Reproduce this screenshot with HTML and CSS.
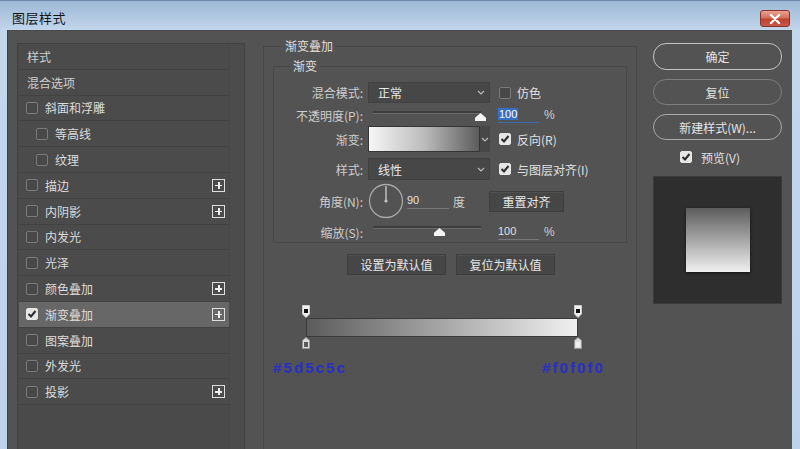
FILE: index.html
```html
<!DOCTYPE html>
<html lang="zh">
<head>
<meta charset="utf-8">
<title>图层样式</title>
<link rel="stylesheet" href="styles.css">
</head>
<body>
<div class="window">
  <div class="titlebar">
    <span class="title">图层样式</span>
    <span class="close"><svg width="12" height="10" viewBox="0 0 12 10"><path d="M2 1 L10 9 M10 1 L2 9" stroke="#fff" stroke-width="2.4" stroke-linecap="round"/></svg></span>
  </div>
  <div class="body">
    <div class="left">
      <div class="list">
        <div class="row head">样式</div>
        <div class="row head">混合选项</div>
        <div class="row"><span class="cb"></span><span class="lbl">斜面和浮雕</span></div>
        <div class="row sub"><span class="cb"></span><span class="lbl">等高线</span></div>
        <div class="row sub"><span class="cb"></span><span class="lbl">纹理</span></div>
        <div class="row"><span class="cb"></span><span class="lbl">描边</span><span class="plus"></span></div>
        <div class="row"><span class="cb"></span><span class="lbl">内阴影</span><span class="plus"></span></div>
        <div class="row"><span class="cb"></span><span class="lbl">内发光</span></div>
        <div class="row"><span class="cb"></span><span class="lbl">光泽</span></div>
        <div class="row"><span class="cb"></span><span class="lbl">颜色叠加</span><span class="plus"></span></div>
        <div class="row selected"><span class="cb checked"><svg width="10" height="10" viewBox="0 0 10 10"><path d="M1.5 5 L4 7.5 L8.5 2" fill="none" stroke="#2b2b2b" stroke-width="2"/></svg></span><span class="lbl">渐变叠加</span><span class="plus"></span></div>
        <div class="row"><span class="cb"></span><span class="lbl">图案叠加</span></div>
        <div class="row"><span class="cb"></span><span class="lbl">外发光</span></div>
        <div class="row"><span class="cb"></span><span class="lbl">投影</span><span class="plus"></span></div>
      </div>
      <div class="scroll"></div>
    </div>

    <div class="middle">
      <fieldset class="outer">
        <legend>渐变叠加</legend>
        <fieldset class="inner">
          <legend>渐变</legend>
          <div class="frow r1">
            <span class="flabel">混合模式:</span>
            <span class="select"><span class="sval">正常</span><span class="chev"><svg width="8" height="5" viewBox="0 0 8 5"><path d="M1 1 L4 4 L7 1" fill="none" stroke="#bbb" stroke-width="1.2"/></svg></span></span>
            <span class="cb ml"></span><span class="ctext">仿色</span>
          </div>
          <div class="frow r2">
            <span class="flabel">不透明度(P):</span>
            <span class="slider"><span class="track"></span><span class="thumb" style="left:107px"></span></span>
            <span class="num"><span class="hl">100</span></span><span class="pct">%</span>
          </div>
          <div class="frow r3">
            <span class="flabel">渐变:</span>
            <span class="gswatch"></span><span class="gchev"><svg width="8" height="5" viewBox="0 0 8 5"><path d="M1 1 L4 4 L7 1" fill="none" stroke="#bbb" stroke-width="1.2"/></svg></span>
            <span class="cb checked ml"><svg width="10" height="10" viewBox="0 0 10 10"><path d="M1.5 5 L4 7.5 L8.5 2" fill="none" stroke="#2b2b2b" stroke-width="2"/></svg></span><span class="ctext">反向(R)</span>
          </div>
          <div class="frow r4">
            <span class="flabel">样式:</span>
            <span class="select"><span class="sval">线性</span><span class="chev"><svg width="8" height="5" viewBox="0 0 8 5"><path d="M1 1 L4 4 L7 1" fill="none" stroke="#bbb" stroke-width="1.2"/></svg></span></span>
            <span class="cb checked ml"><svg width="10" height="10" viewBox="0 0 10 10"><path d="M1.5 5 L4 7.5 L8.5 2" fill="none" stroke="#2b2b2b" stroke-width="2"/></svg></span><span class="ctext">与图层对齐(I)</span>
          </div>
          <div class="frow r5">
            <span class="flabel">角度(N):</span>
            <span class="dial"><svg width="36" height="36" viewBox="0 0 36 36"><circle cx="18" cy="18" r="16.5" fill="none" stroke="#a8a8a8" stroke-width="1.3"/><line x1="18" y1="18" x2="18" y2="3" stroke="#c8c8c8" stroke-width="1.4"/><circle cx="18" cy="18" r="1.6" fill="#c8c8c8"/></svg></span>
            <span class="num angle">90</span><span class="deg">度</span>
            <span class="btn reset">重置对齐</span>
          </div>
          <div class="frow r6">
            <span class="flabel">缩放(S):</span>
            <span class="slider"><span class="track"></span><span class="thumb" style="left:66px"></span></span>
            <span class="num">100</span><span class="pct">%</span>
          </div>
        </fieldset>

        <div class="defaults">
          <span class="btn dbtn">设置为默认值</span>
          <span class="btn dbtn">复位为默认值</span>
        </div>

        <div class="geditor">
          <div class="stops">
            <svg width="8" height="13" viewBox="0 0 8 13"><path d="M0.5 0.5 H7.5 V9 L4 12.5 L0.5 9 Z" fill="#eee" stroke="#ccc"/><rect x="2" y="4" width="4" height="4" fill="#111"/></svg>
            <svg width="8" height="13" viewBox="0 0 8 13"><path d="M0.5 0.5 H7.5 V9 L4 12.5 L0.5 9 Z" fill="#eee" stroke="#ccc"/><rect x="2" y="4" width="4" height="4" fill="#111"/></svg>
          </div>
          <div class="gbar"></div>
          <div class="stops">
            <svg width="8" height="12" viewBox="0 0 8 12"><path d="M0.5 11.5 V3.5 L4 0.5 L7.5 3.5 V11.5 Z" fill="#ddd" stroke="#999"/><rect x="2" y="5" width="4" height="5" fill="#5d5c5c"/></svg>
            <svg width="8" height="12" viewBox="0 0 8 12"><path d="M0.5 11.5 V3.5 L4 0.5 L7.5 3.5 V11.5 Z" fill="#ddd" stroke="#999"/><rect x="2" y="5" width="4" height="5" fill="#f0f0f0"/></svg>
          </div>
        </div>

        <div class="hex"><span>#5d5c5c</span><span>#f0f0f0</span></div>
      </fieldset>
    </div>

    <div class="right">
      <span class="pill primary">确定</span>
      <span class="pill dim">复位</span>
      <span class="pill">新建样式(W)...</span>
      <div class="preview-row"><span class="cb checked"><svg width="10" height="10" viewBox="0 0 10 10"><path d="M1.5 5 L4 7.5 L8.5 2" fill="none" stroke="#2b2b2b" stroke-width="2"/></svg></span><span class="ptext">预览(V)</span></div>
      <div class="preview"><div class="psquare"></div></div>
    </div>
  </div>
</div>
</body>
</html>
```

FILE: styles.css
```css
* { box-sizing: border-box; }
html, body { margin: 0; padding: 0; }
body {
  font-family: "Noto Sans CJK SC", "Noto Sans", sans-serif;
  font-size: 12px;
  background: #b9cfe8;
}
.window {
  width: 800px;
  height: 449px;
  overflow: hidden;
  display: flex;
  flex-direction: column;
  background: linear-gradient(to bottom, #9db8d6 0px, #b9cee6 22px, #c3d7ec 30px, #bcd3ec 100%);
  border-top: 1px solid #6f8aa8;
}
.titlebar {
  flex: none;
  height: 29px;
  display: flex;
  align-items: center;
  justify-content: space-between;
  padding: 5px 10px 0 12px;
}
.title {
  font-size: 13px;
  color: #151515;
  line-height: 16px;
  letter-spacing: 0.5px;
}
.close {
  width: 30px;
  height: 17px;
  margin-top: 1px;
  border: 1px solid #8a3425;
  border-radius: 3px;
  background: linear-gradient(to bottom, #e9a394 0%, #d4705c 45%, #bd432c 55%, #c9584a 100%);
  display: flex;
  align-items: center;
  justify-content: center;
}
.body {
  flex: 1;
  min-height: 0;
  overflow: hidden;
  margin: 0 8px 0 7px;
  background: #535353;
  border-left: 1px solid #3f3f3f;
  border-top: 1px solid #4a4a4a;
  display: flex;
  align-items: flex-start;
  padding: 7px 0 0 9px;
}

/* left list */
.left {
  flex: none;
  margin-top: 5px;
  width: 228px;
  height: 420px;
  display: flex;
  border: 1px solid #404040;
  background: #4a4a4a;
}
.list {
  width: 211px;
  padding-left: 1px;
}
.scroll {
  flex: 1;
  background: #4c4c4c;
  border-left: 1px solid #474747;
}
.row {
  height: 25.8px;
  display: flex;
  align-items: center;
  padding-left: 7px;
  border-bottom: 1px solid #424242;
  color: #dcdcdc;
  background: #4b4b4b;
}
.row.head { color: #cfcfcf; padding-left: 8px; }
.row.sub { padding-left: 17px; }
.row.selected { background: #676767; }
.row .lbl { margin-left: 7px; }
.row .plus {
  margin-left: auto;
  margin-right: 4px;
  width: 13px;
  height: 13px;
  border: 1px solid #dedede;
  position: relative;
}
.row .plus::before, .row .plus::after {
  content: "";
  position: absolute;
  background: #eee;
}
.row .plus::before { left: 2px; right: 2px; top: 5px; height: 1.5px; }
.row .plus::after { top: 2px; bottom: 2px; left: 5px; width: 1.5px; }

.cb {
  width: 12px;
  height: 12px;
  flex: none;
  border: 1px solid #7a7a7a;
  border-radius: 2px;
  background: #484848;
  display: inline-flex;
  align-items: center;
  justify-content: center;
}
.cb.checked {
  background: #e6e6e6;
  border-color: #e6e6e6;
}

/* middle */
.middle {
  flex: none;
  margin-left: 18px;
  width: 374px;
}
fieldset {
  margin: 0;
  min-width: 0;
}
legend {
  line-height: 16px;
  color: #dedede;
}
.outer {
  border: 1px solid #474747;
  padding: 0 9px;
  height: 420px;
}
.outer > legend {
  margin-left: 9px;
  padding: 0 3px;
}
.inner {
  margin-top: 4px;
  border: 1px solid #474747;
  padding: 0;
}
.inner > legend {
  margin-left: 16px;
  padding: 0 3px;
}
.frow {
  display: flex;
  align-items: center;
  color: #d8d8d8;
}
.flabel {
  width: 89px;
  margin-right: 5px;
  text-align: right;
  color: #cdcdcd;
}
.r1 { margin-top: 8px; height: 21px; }
.r2 { margin-top: 1px; height: 22px; }
.r3 { height: 26px; }
.r4 { margin-top: 6px; height: 22px; }
.r5 { margin-top: 3px; height: 36px; }
.r6 { margin-top: 3px; height: 20px; }

.select {
  width: 122px;
  height: 100%;
  background: #474747;
  border: 1px solid #414141;
  display: flex;
  align-items: center;
  padding-left: 9px;
  color: #e8e8e8;
}
.select .chev { margin-left: auto; margin-right: 4px; display: flex; }
.ml { margin-left: 9px; }
.ctext { margin-left: 6px; color: #e0e0e0; }

.slider {
  position: relative;
  width: 110px;
  height: 100%;
  margin-left: 5px;
}
.track {
  position: absolute;
  left: 0;
  right: 2px;
  top: 7px;
  height: 3px;
  background: #3e3e3e;
  border-bottom: 1px solid #6a6a6a;
}
.r6 .track { top: 4px; }
.thumb {
  position: absolute;
  top: 9px;
  width: 11px;
  height: 8px;
  margin-left: -5px;
  background: #f4f4f4;
  clip-path: polygon(50% 0, 100% 60%, 100% 100%, 0 100%, 0 60%);
}
.r6 .thumb { top: 6px; }
.num {
  width: 41px;
  margin-left: 15px;
  border-bottom: 1px solid #777;
  line-height: 14px;
  padding-bottom: 1px;
  color: #e0e0e0;
  font-family: "Liberation Sans", sans-serif;
  font-size: 11px;
}
.r2 .num { border-bottom-color: #3d6cb0; }
.hl {
  background: #3470c8;
  color: #fff;
  padding: 0 1px;
}
.pct {
  margin-left: 5px;
  color: #d0d0d0;
  font-family: "Liberation Sans", sans-serif;
}
.gswatch {
  width: 112px;
  height: 100%;
  border: 1px solid #353535;
  background: linear-gradient(to right, #f6f6f6 0%, #bdbcbc 50%, #5d5c5c 100%);
}
.gchev {
  width: 10px;
  height: 100%;
  background: #474747;
  display: flex;
  align-items: center;
  justify-content: center;
}
.dial {
  width: 36px;
  height: 36px;
  display: flex;
}
.num.angle {
  width: 42px;
  margin-left: 3px;
}
.deg { margin-left: 4px; color: #d0d0d0; }
.btn {
  display: inline-flex;
  align-items: center;
  justify-content: center;
  background: #464646;
  border: 1px solid #3e3e3e;
  box-shadow: inset 0 1px 0 #505050;
  color: #e6e6e6;
}
.reset {
  margin-left: 24px;
  width: 75px;
  height: 21px;
}
.defaults {
  margin-top: 11px;
  display: flex;
  justify-content: center;
  gap: 10px;
  padding-left: 2px;
}
.dbtn {
  width: 99px;
  height: 21px;
}

.geditor {
  margin-top: 30px;
  margin-left: 29px;
  width: 280px;
}
.stops {
  display: flex;
  justify-content: space-between;
}
.stops svg { display: block; }
.gbar {
  margin: 0 4px;
  height: 19px;
  border: 1px solid #3a3a3a;
  background: linear-gradient(to right, #5d5c5c, #f0f0f0);
}
.hex {
  margin-top: 10px;
  width: 332px;
  display: flex;
  justify-content: space-between;
  font-family: "Liberation Sans", sans-serif;
  font-weight: bold;
  font-size: 15px;
  letter-spacing: 2.1px;
  color: #2630c8;
  line-height: 18px;
}

/* right */
.right {
  flex: none;
  margin-left: 16px;
  margin-top: 5px;
  width: 129px;
  display: flex;
  flex-direction: column;
  align-items: stretch;
}
.pill {
  height: 26px;
  border: 1.5px solid #a9a9a9;
  border-radius: 13px;
  display: flex;
  align-items: center;
  justify-content: center;
  color: #e4e4e4;
  margin-bottom: 9px;
}
.pill.primary { height: 27px; border-color: #c4c4c4; }
.pill.dim { border-color: #7d7d7d; }
.preview-row {
  display: flex;
  align-items: center;
  padding-left: 27px;
  margin-top: 1px;
  height: 14px;
}
.ptext { margin-left: 9px; color: #e0e0e0; }
.preview {
  margin-top: 12px;
  height: 128px;
  background: #2e2e2e;
  border: 1px solid #3a3a3a;
  display: flex;
  align-items: center;
  justify-content: center;
}
.psquare {
  width: 64px;
  height: 64px;
  background: linear-gradient(to bottom, #5d5c5c, #f0f0f0);
  box-shadow: 0 1px 3px rgba(0,0,0,0.6);
}
```
